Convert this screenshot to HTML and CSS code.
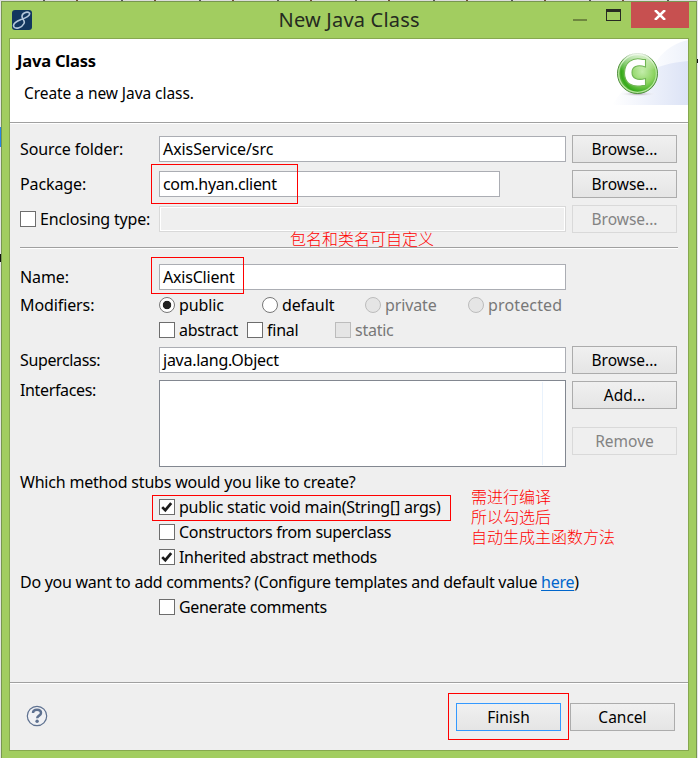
FILE: index.html
```html
<!DOCTYPE html>
<html lang="en">
<head>
<meta charset="utf-8">
<title>New Java Class</title>
<link rel="stylesheet" href="styles.css">
</head>
<body>
<svg class="defs" width="0" height="0"><symbol id="tick" viewBox="0 0 16 16"><path d="M3.2 8.1 6.3 11.2 12.2 4.2" fill="none" stroke="#1c1c1c" stroke-width="2.7"/></symbol></svg>
<div class="window">
  <header class="titlebar">
    <svg class="app-icon" width="20" height="20" viewBox="0 0 20 20"><rect width="20" height="20" rx="3" fill="#12365f"/><path d="M17.500 3C15 1 10 3 10 6.500C10 9.500 13.500 10.500 12 13.500C10 17.500 4 19.500 2 17C0 14 5 11 9 9.500C14 8 18.500 5.500 17.500 3Z" fill="none" stroke="#b4c7dc" stroke-width="1.600"/></svg>
    <h1>New Java Class</h1>
    <div class="controls">
      <span class="minimize"></span><span class="maximize"></span>
      <span class="close"><svg width="12" height="10" viewBox="0 0 12 10"><path d="M1 0 11 10M11 0 1 10" stroke="#fff" stroke-width="2.500"/></svg></span>
    </div>
  </header>
  <main class="client">
    <section class="banner">
      <div class="banner-text"><h2>Java Class</h2><p>Create a new Java class.</p></div>
      <svg class="banner-art" width="76" height="66" viewBox="0 0 76 66">
        <defs>
          <linearGradient id="sky"><stop offset="0" stop-color="#fff"/><stop offset="1" stop-color="#dce3f6"/></linearGradient>
          <linearGradient id="sky2"><stop offset="0" stop-color="#fff"/><stop offset="1" stop-color="#eef2fb"/></linearGradient>
          <radialGradient id="ball" cx=".62" cy=".45" r=".62"><stop offset="0" stop-color="#c3edaa"/><stop offset=".5" stop-color="#8bd35f"/><stop offset=".85" stop-color="#35a91a"/><stop offset="1" stop-color="#7fc05b"/></radialGradient>
          <linearGradient id="gloss" x2="0" y2="1"><stop offset="0" stop-color="#fff" stop-opacity=".85"/><stop offset="1" stop-color="#fff" stop-opacity="0"/></linearGradient>
          <radialGradient id="shade"><stop offset="0" stop-color="#8d8490" stop-opacity=".75"/><stop offset="1" stop-color="#fff" stop-opacity="0"/></radialGradient>
        </defs>
        <path d="M32 66C35 25 51 7 76 1V66Z" fill="url(#sky2)"/>
        <path d="M0 66C20 36 43 25 76 22V66Z" fill="url(#sky)"/>
        <ellipse cx="26" cy="55" rx="19" ry="2.500" fill="url(#shade)"/>
        <circle cx="25.500" cy="34.500" r="20" fill="url(#ball)" stroke="#508d3e"/>
        <circle cx="25.500" cy="34.500" r="18.800" fill="none" stroke="#b9e6a1" stroke-width="1.200"/>
        <path d="M8 32A17.500 17.500 0 0 1 43 30C30 35 22 29 8 32Z" fill="url(#gloss)"/>
        <path d="M33.500 20.500H31C20 17.500 12.500 24 12.500 34S20 49 31 46.500H33.500V39.500C25 42 20 39 20 33.500S25 25 33.500 28Z" fill="#fff" stroke="#70b654" stroke-width="1.100"/>
      </svg>
    </section>
    <form class="form">
      <div class="row"><label class="name">Source folder:</label><div class="field"><span class="v-source">AxisService/src</span></div><button type="button">Browse...</button></div>
      <div class="row"><label class="name">Package:</label><div class="field short"><span class="v-package">com.hyan.client</span></div><button type="button">Browse...</button><i class="mark mark-package"></i></div>
      <div class="row"><label class="name check"><i class="box"></i><span class="t-enc">Enclosing type:</span></label><div class="field off"></div><button type="button" disabled>Browse...</button><p class="note note-names">包名和类名可自定义</p></div>
      <hr>
      <div class="row row-name"><label class="name">Name:</label><div class="field"><span class="v-name">AxisClient</span></div><i class="mark mark-name"></i></div>
      <div class="row modifiers"><span class="name">Modifiers:</span>
        <div class="radios"><label class="check"><i class="radio on"></i>public</label><label class="check"><i class="radio"></i>default</label><label class="check dim"><i class="radio"></i>private</label><label class="check dim wide"><i class="radio"></i>protected</label></div></div>
      <div class="row flags"><span class="name"></span><div class="checks"><label class="check"><i class="box"></i>abstract</label><label class="check"><i class="box"></i>final</label><label class="check dim"><i class="box"></i>static</label></div></div>
      <div class="row row-super"><label class="name tight">Superclass:</label><div class="field"><span class="v-super">java.lang.Object</span></div><button type="button">Browse...</button></div>
      <div class="row row-list"><label class="name tight">Interfaces:</label><div class="list"></div><div class="stack"><button type="button">Add...</button><button type="button" disabled>Remove</button></div></div>
      <p class="question"><span class="q1">Which method stubs would you like to create?</span></p>
      <div class="options">
        <label class="check"><i class="box"><svg width="16" height="16"><use href="#tick"/></svg></i><span class="o1">public static void main(String[] args)</span><i class="mark mark-main"></i></label>
        <label class="check"><i class="box"></i><span class="o2">Constructors from superclass</span></label>
        <label class="check"><i class="box"><svg width="16" height="16"><use href="#tick"/></svg></i><span class="o3">Inherited abstract methods</span></label>
        <p class="note note-main">需进行编译<br>所以勾选后<br>自动生成主函数方法</p>
      </div>
      <p class="question second"><span class="q2">Do you want to add comments? (Configure templates and default value <a>here</a>)</span></p>
      <div class="options"><label class="check"><i class="box"></i><span class="o4">Generate comments</span></label></div>
    </form>
    <footer class="footer">
      <svg class="help" width="22" height="22" viewBox="0 0 22 22"><circle cx="11" cy="11" r="9.700" fill="#f0f1f4" stroke="#5e7190" stroke-width="1.200"/><path d="M7 8C7 3.600 15 3.600 15 8C15 10.800 11.200 10.400 11.200 13.200" fill="none" stroke="#5e7190" stroke-width="2.500"/><circle cx="11.100" cy="16.200" r="1.700" fill="#5e7190"/></svg>
      <div class="actions"><button class="primary" type="button">Finish</button><button type="button">Cancel</button><i class="mark mark-finish"></i></div>
    </footer>
  </main>
</div>
</body>
</html>
```

FILE: styles.css
```css
* { box-sizing: border-box; }
body { margin: 0; width: 698px; height: 758px; overflow: hidden; padding: 1px 1px 0; background: linear-gradient(#2785e8 0 0) 0 127px / 1px 20px no-repeat, linear-gradient(#111 0 0) 0 254px / 1px 8px no-repeat, linear-gradient(#111 0 0) 697px 59px / 1px 4px no-repeat, repeating-linear-gradient(90deg, #ddd 0 43px, #555 43px 45px, #ddd 45px 76px, #704c38 76px 78px) 0 0 / 698px 1px no-repeat, #e5e5e5; font: 16px/24px "Noto Sans", "Open Sans", "Noto Sans CJK SC", sans-serif; color: #000; }
h1, h2, p { margin: 0; font-weight: 400; }
.defs { position: absolute; }
.window { width: 696px; height: 757px; border: 1px solid #789650; border-bottom: 0; background: #a2cd60; display: flex; flex-direction: column; }
.titlebar { height: 36px; display: flex; justify-content: space-between; padding-left: 10px; }
.app-icon { margin-top: 8px; }
h1 { font-size: 20px; line-height: 36px; letter-spacing: .2px; color: #252b20; margin-left: 94px; width: 142px; white-space: nowrap; }
.controls { display: flex; width: 123px; }
.minimize { width: 14px; height: 2px; margin-top: 17px; background: #6e873f; flex: none; }
.maximize { width: 15px; height: 12px; margin: 7px 0 0 19px; border: 1px solid #272a22; border-top-width: 3px; flex: none; }
.close { width: 58px; height: 26px; margin-left: 10px; background: #c75050; flex: none; display: flex; justify-content: center; padding-top: 8px; }
.client { margin: 0 7px; width: 680px; height: 713px; border: 1px solid #86a84f; background: #efefef; display: flex; flex-direction: column; }
.banner { height: 85px; background: #fff; border-bottom: 1px solid #fff; box-shadow: inset 0 -1px #a0a0a0; display: flex; justify-content: space-between; }
.banner-text { padding: 10px 0 0 7px; }
h2 { font-size: 16.500px; font-weight: 700; line-height: 24px; letter-spacing: -.2px; }
.banner-text p { margin: 8px 0 0 7px; font-size: 15.500px; letter-spacing: -.06px; }
.form { height: 558px; padding: 11px 0 0 10px; }
.row { position: relative; height: 28px; margin-bottom: 7px; display: flex; align-items: center; white-space: nowrap; }
.name { width: 139px; flex: none; letter-spacing: -.1px; }
.tight { letter-spacing: -.36px; }
.field { width: 407px; height: 26px; border: 1px solid #abadb3; background: #fff; padding-left: 3px; line-height: 24px; }
.short { width: 341px; margin-right: 66px; }
.off { border-color: #d9d9d9; background: #efefef; box-shadow: inset 0 0 0 1px #fff; }
.v-source { letter-spacing: -.08px; }
.v-package { letter-spacing: -.32px; }
.v-name { letter-spacing: -.2px; }
.v-super { letter-spacing: -.25px; }
.t-enc { letter-spacing: -.2px; }
button { width: 105px; height: 28px; margin: 0 0 0 6px; padding: 0; border: 1px solid #acacac; background: linear-gradient(#f0f0f0, #e5e5e5); color: #000; font: inherit; font-size: 15.500px; line-height: 26px; flex: none; }
button:disabled { border-color: #d9d9d9; background: #efefef; color: #838383; }
hr { height: 2px; width: 658px; margin: 14px 0 14px; border: 0; border-top: 1px solid #a0a0a0; background: #fff; }
.row-name { margin-bottom: 4px; }
.modifiers { height: 20px; margin: 0 0 5px; }
.flags { height: 20px; margin: 0 0 6px; }
.check { position: relative; display: flex; align-items: center; gap: 4px; white-space: nowrap; }
.box, .radio { width: 16px; height: 16px; background: #fff; border: 1px solid #6d6d6d; flex: none; display: block; }
.box svg { display: block; margin: -1px; }
.radio { border-radius: 50%; border-color: #777; }
.on { background: radial-gradient(circle, #222 0 3.800px, #fff 4.600px); }
.dim { color: #787878; }
.dim i { background: #e5e5e5; border-color: #bcbcbc; }
.radios { display: grid; grid-template-columns: repeat(4, 103px); letter-spacing: -.12px; }
.wide { letter-spacing: .15px; }
.checks { display: grid; grid-template-columns: 88px 88px 88px; letter-spacing: -.25px; }
.row-list { height: 87px; margin: 0 0 3px; align-items: flex-start; }
.row-super { margin-bottom: 6px; }
.row-list .name { margin-top: -2px; }
.list { width: 407px; height: 87px; border: 1px solid #828790; background: linear-gradient(#e9f2fc 0 0) 382px 1px / 1px 83px no-repeat #fff; }
.stack { display: grid; row-gap: 18px; padding-top: 1px; }
.question { height: 24px; line-height: 25px; white-space: nowrap; }
.second { margin-top: 1px; }
.q1 { letter-spacing: -.2px; }
.q2 { letter-spacing: -.265px; }
.o1 { letter-spacing: -.22px; }
.o2 { letter-spacing: -.3px; }
.o3 { letter-spacing: -.3px; }
.o4 { letter-spacing: -.33px; }
.options { position: relative; padding-left: 139px; }
.options .check { height: 25px; }
a { color: #0066cc; text-decoration: underline; text-underline-offset: 2px; }
.footer { height: 68px; border-top: 1px solid #a0a0a0; box-shadow: inset 0 1px #fff; display: flex; justify-content: space-between; padding: 0 13px 0 16px; }
.help { margin-top: 22px; }
.actions { position: relative; display: flex; padding-top: 20px; }
.actions button { margin-left: 9px; }
.primary { border-color: #3399ff; }
.mark { position: absolute; border: 1px solid #f00; }
.mark-package { left: 131px; top: -6px; width: 147px; height: 40px; }
.mark-name { left: 131px; top: -6px; width: 93px; height: 37px; }
.mark-main { left: -7px; top: 1px; width: 299px; height: 26px; }
.mark-finish { left: 1px; top: 10px; width: 121px; height: 47px; }
.note { position: absolute; color: #f00; font: 300 16px/20px "Noto Sans CJK SC", sans-serif; white-space: nowrap; }
.note-names { left: 270px; top: 23px; }
.note-main { left: 451px; top: -8px; }
```
